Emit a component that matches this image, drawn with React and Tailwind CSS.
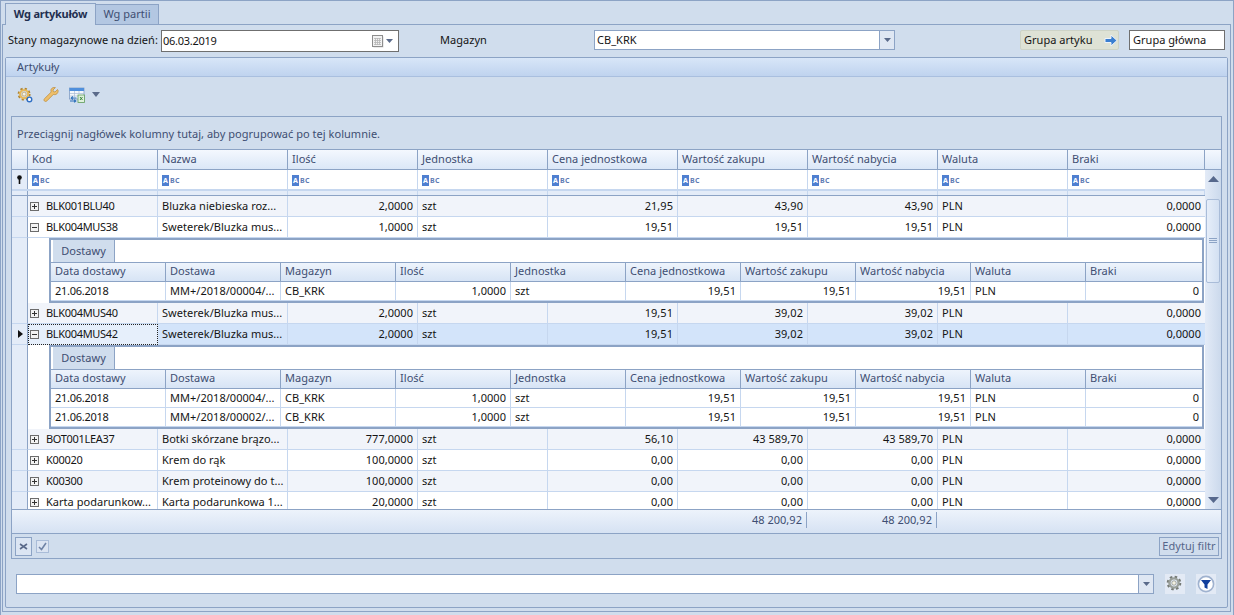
import React from "react";

const MAIN_COLS = "grid grid-cols-[16px_130px_130px_130px_130px_130px_130px_130px_130px_137px]";
const SUB_COLS = "grid grid-cols-[115px_115px_115px_115px_115px_115px_115px_115px_115px_116px]";
const HEADS = ["Kod", "Nazwa", "Ilość", "Jednostka", "Cena jednostkowa", "Wartość zakupu", "Wartość nabycia", "Waluta", "Braki"];
const SUBHEADS = ["Data dostawy", "Dostawa", "Magazyn", "Ilość", "Jednostka", "Cena jednostkowa", "Wartość zakupu", "Wartość nabycia", "Waluta", "Braki"];

const Gear = ({ c = "#e8b95a", dark = "#b08532", dot = true, size = 16 }) => (
  <svg width={size} height={size} viewBox="0 0 18 18">
    <circle cx="8" cy="8" r="6" fill="none" stroke={dark} strokeWidth="2.6" strokeDasharray="2.4 2.3" />
    <circle cx="8" cy="8" r="4.6" fill="none" stroke={c} strokeWidth="2.4" />
    <circle cx="8" cy="8" r="2.2" fill="#f3f1e2" stroke={dark} strokeWidth="0.6" />
    {dot && <circle cx="14" cy="14" r="2.6" fill="#fff" stroke="#2f6fc4" strokeWidth="1.6" />}
  </svg>
);
const Wrench = () => (
  <svg width="16" height="16" viewBox="0 0 16 16">
    <path d="M14.5 2.5 12 5l-1.6-.4L10 3l2.4-2.4C10.5 0 8.5 1 8 2.6c-.3 1 0 1.8.2 2.4L1.6 11.6c-.8.8-.8 1.8-.2 2.4s1.7.7 2.5-.1l6.5-6.5c.7.2 1.5.4 2.4.1 1.7-.6 2.7-2.6 2.2-4.5z" fill="#eebf6b" stroke="#b98a3a" strokeWidth="0.7" />
  </svg>
);
const TableExport = () => (
  <svg width="16" height="16" viewBox="0 0 16 16">
    <rect x="0.5" y="1" width="14.5" height="11" fill="#f4f7fb" stroke="#7f9cc4" strokeWidth="0.8" />
    <rect x="0.5" y="1" width="14.5" height="3" fill="#4f8fdc" />
    <path d="M1 6.5h14M1 9h8M5.5 4v6M10 4v3" stroke="#a9bcd6" strokeWidth="0.7" />
    <rect x="9" y="8" width="6.5" height="7.5" fill="#dff0dc" stroke="#5e9c5b" strokeWidth="0.8" />
    <path d="m11 10 2.5 3M13.5 10 11 13" stroke="#2f7d32" strokeWidth="0.9" />
    <path d="M7.5 11H2.5M3.8 9.4 2.2 11l1.6 1.6M1 14h5.5M5.2 12.6 6.8 14l-1.6 1.4" fill="none" stroke="#2c6fba" strokeWidth="1.1" />
  </svg>
);
const Abc = () => (
  <span className="mt-[1px] inline-flex h-[11px] items-center">
    <span className="flex h-[11px] w-[7px] items-center justify-center bg-[#4f7fd0] text-[7px] font-bold leading-none text-white">A</span>
    <span className="ml-[1px] text-[7px] font-bold leading-none tracking-[0.3px] text-[#5d7bb3]">BC</span>
  </span>
);
const Caret = ({ className = "", w = 7, h = 4 }) => (
  <svg width={w} height={h} viewBox="0 0 9 5" preserveAspectRatio="none" className={className}>
    <path d="M0 0h9L4.5 5z" fill="#5a6a8a" />
  </svg>
);
const Expander = ({ open }) => (
  <span className="flex h-[9px] w-[9px] shrink-0 items-center justify-center border border-[#6c6c6c] bg-[#f3f3f3]">
    <svg width="7" height="7" viewBox="0 0 7 7">
      <path d={open ? "M1 3.5h5" : "M1 3.5h5M3.5 1v5"} stroke="#333" strokeWidth="1" />
    </svg>
  </span>
);

const Row = ({ r, alt, selected, open, wide }) => {
  const bg = selected ? "bg-[#d3e4fa]" : alt ? "bg-[#f1f4fa]" : "bg-white";
  const cell = `h-[21px] overflow-hidden whitespace-nowrap border-b border-r border-[#c6d7ef] px-[4px] leading-[20px] ${bg}`;
  return (
    <div className={`${MAIN_COLS} h-[21px] text-[#141414]`}>
      <div className="flex h-[21px] items-center justify-center border-b border-r border-b-[#c6d7ef] border-r-[#8ca3c5] bg-[#e4ecf8]">
        {selected && (
          <svg width="5" height="8" viewBox="0 0 5 8" className="ml-[2px]"><path d="M0 0l5 4-5 4z" fill="#111" /></svg>
        )}
      </div>
      <div className={`flex h-[21px] items-center overflow-hidden whitespace-nowrap ${selected ? "border border-dotted border-[#222] bg-[#e6effb] pl-[1px]" : `border-b border-r border-[#c6d7ef] pl-[2px] ${bg}`}`}>
        <Expander open={open} />
        <span className={`ml-[7px] ${wide ? "" : "tracking-[-0.32px]"}`}>{r[0]}</span>
      </div>
      <div className={cell}>{r[1]}</div>
      <div className={`${cell} text-right`}>{r[2]}</div>
      <div className={cell}>szt</div>
      <div className={`${cell} text-right`}>{r[3]}</div>
      <div className={`${cell} text-right`}>{r[4]}</div>
      <div className={`${cell} text-right`}>{r[5]}</div>
      <div className={cell}>PLN</div>
      <div className={`${cell} border-r-0 text-right`}>0,0000</div>
    </div>
  );
};

const Detail = ({ rows }) => (
  <div className="flex">
    <div className="w-[16px] shrink-0 border-r border-r-[#8ca3c5] bg-[#e4ecf8]" />
    <div className="w-[1177px] bg-white pl-[21px]">
      <div className="w-[1155px] border-2 border-[#8ca3c5] bg-white">
        <div className="flex h-[22px] pl-[2px]">
          <div className="flex h-[22px] w-[62px] items-center justify-center border-r border-[#8ca3c5] bg-[#d0dded] text-[#3e4e72]">Dostawy</div>
        </div>
        <div className={`${SUB_COLS} h-[20px] border-b border-t border-[#8ca3c5] bg-gradient-to-b from-[#eef4fc] to-[#d7e4f5] text-[#3e4e72]`}>
          {SUBHEADS.map((h, i) => (
            <div key={h} className={`px-[4px] leading-[16px] ${i < 9 ? "border-r border-[#8ca3c5]" : ""}`}>{h}</div>
          ))}
        </div>
        {rows.map((d, i) => {
          const c = "h-[19px] overflow-hidden whitespace-nowrap border-b border-r border-[#c6d7ef] px-[4px] leading-[18px]";
          return (
            <div key={i} className={`${SUB_COLS} h-[19px] text-[#141414]`}>
              <div className={`${c} tracking-[-0.28px]`}>21.06.2018</div>
              <div className={c}>{d}</div>
              <div className={c}>CB_KRK</div>
              <div className={`${c} text-right`}>1,0000</div>
              <div className={c}>szt</div>
              <div className={`${c} text-right`}>19,51</div>
              <div className={`${c} text-right`}>19,51</div>
              <div className={`${c} text-right`}>19,51</div>
              <div className={c}>PLN</div>
              <div className={`${c} border-r-0 pr-[3px] text-right`}>0</div>
            </div>
          );
        })}
      </div>
    </div>
  </div>
);

const Scrollbar = () => (
  <div className="flex w-[16px] shrink-0 flex-col items-center bg-gradient-to-r from-[#e3ebf7] to-[#cbd9ec]">
    <svg width="11" height="6" viewBox="0 0 11 6" className="mt-[6px] shrink-0"><path d="M0 6 5.5 0 11 6z" fill="#56688c" /></svg>
    <div className="mt-[17px] flex h-[84px] w-[14px] shrink-0 items-center justify-center rounded-[2px] border border-[#a9bcd8] bg-gradient-to-r from-[#e6eef9] to-[#d3e0f2]">
      <svg width="8" height="6" viewBox="0 0 8 6"><path d="M0 .5h8M0 2.5h8M0 4.5h8" stroke="#8ca3c5" strokeWidth="1" /></svg>
    </div>
    <div className="flex-1" />
    <svg width="11" height="6" viewBox="0 0 11 6" className="mb-[6px] shrink-0"><path d="M0 0 5.5 6 11 0z" fill="#56688c" /></svg>
  </div>
);

export default function App() {
  return (
    <div className="h-[615px] w-[1234px] overflow-hidden border-l border-r border-t border-[#8ca3c5] bg-[#d0dded] text-[11px] tracking-[0.03px] font-['Noto_Sans',sans-serif]">
      {/* tabs */}
      <div className="flex h-[23px] items-end pl-[4px]">
        <div className="relative z-10 -mb-[1px] flex h-[22px] w-[91px] items-center justify-center border-l border-r border-t border-[#8ca3c5] bg-[#d0dded] pb-[1px] font-bold tracking-[-0.25px] text-[#1f2f50]">Wg artykułów</div>
        <div className="flex h-[20px] w-[63px] items-center justify-center border-r border-t border-[#8ca3c5] bg-[#b3c7e2] text-[#3e4e72]">Wg partii</div>
      </div>
      {/* tab page */}
      <div className="ml-[1px] h-[588px] w-[1229px] border border-[#8ca3c5] px-[2px]">
        <div className="flex h-[32px] items-start pt-[5px] text-[#141414]">
          <span className="ml-[3px] w-[153px] whitespace-nowrap leading-[20px]">Stany magazynowe na dzień:</span>
          <div className="flex h-[22px] w-[238px] items-center border border-[#6f6f6f] bg-white pl-[1px]">
            <span className="tracking-[-0.28px]">06.03.2019</span>
            <div className="flex-1" />
            <svg width="12" height="13" viewBox="0 0 12 13">
              <rect x="1.5" y="1.5" width="10" height="11" fill="#9a9a9a" opacity="0.4" />
              <rect x="0.5" y="0.5" width="10" height="11" fill="#f2f2f2" stroke="#8d8d8d" />
              <path d="M2 3.5h7M2 5.5h7M2 7.5h7M2 9.5h7M3.5 3v7M5.5 3v7M7.5 3v7" stroke="#b5b5b5" strokeWidth="0.8" />
            </svg>
            <Caret className="ml-[2px] mr-[5px]" />
          </div>
          <span className="ml-[41px] w-[154px] leading-[20px]">Magazyn</span>
          <div className="flex h-[20px] w-[301px] items-center border border-[#8ca3c5] bg-white pl-[2px]">
            <span>CB_KRK</span>
            <div className="flex-1" />
            <div className="flex h-full w-[15px] items-center justify-center border-l border-[#8ca3c5] bg-[#dfe7f3]"><Caret /></div>
          </div>
          <div className="ml-[125px] flex h-[20px] w-[99px] items-center whitespace-nowrap rounded-[2px] border border-[#cdd3c6] bg-[#dee2d5] pl-[3px]">
            <span>Grupa artyku</span>
            <svg width="14" height="13" viewBox="0 0 14 13" className="ml-[12px] shrink-0">
              <path d="M1 4.5h6V1l6 5.5L7 12V8.5H1z" fill="#3b7fd0" stroke="#eef3fa" strokeWidth="1" />
            </svg>
          </div>
          <div className="ml-[10px] flex h-[20px] w-[96px] items-center whitespace-nowrap border border-[#6f6f6f] bg-white pl-[3px]">Grupa główna</div>
        </div>
        {/* group box */}
        <div className="h-[551px] w-[1223px] rounded-[2px] border border-[#8ca3c5] ">
          <div className="flex h-[19px] items-center border-b border-[#a9bfdf] bg-gradient-to-b from-[#d8e6f8] to-[#bfd3ef] pl-[11px] text-[#3e4e72]">Artykuły</div>
          <div className="flex h-[39px] items-start pl-[11px] pt-[10px]">
            <Gear />
            <span className="ml-[10px]"><Wrench /></span>
            <span className="ml-[10px]"><TableExport /></span>
            <Caret w={8} h={5} className="ml-[7px] mt-[5px]" />
          </div>
          {/* grid */}
          <div className="ml-[5px] w-[1211px] border border-[#8ca3c5]">
            <div className="flex h-[32px] items-end pb-[7px] pl-[5px] text-[#3e4e72]">Przeciągnij nagłówek kolumny tutaj, aby pogrupować po tej kolumnie.</div>
            <div className="flex h-[21px] border-b border-t border-[#8ca3c5] bg-gradient-to-b from-[#f4f8fe] to-[#dbe7f7] text-[#3e4e72]">
              <div className={`${MAIN_COLS} w-[1193px]`}>
                <div className="border-r border-[#8ca3c5]" />
                {HEADS.map((h) => (
                  <div key={h} className="border-r border-[#8ca3c5] px-[4px] leading-[18px]">{h}</div>
                ))}
              </div>
            </div>
            <div className="flex h-[339px]">
              <div className="w-[1193px] overflow-hidden bg-white">
                <div className={`${MAIN_COLS} h-[21px] border-b-2 border-[#c6d7ef] bg-white`}>
                  <div className="flex items-center justify-center border-r border-[#8ca3c5] bg-[#e4ecf8]">
                    <svg width="7" height="9" viewBox="0 0 7 9"><circle cx="3.5" cy="2.5" r="2.3" fill="#111" /><path d="M3.5 4v5" stroke="#111" strokeWidth="1.6" /></svg>
                  </div>
                  {HEADS.map((h, i) => (
                    <div key={h} className={`flex items-center pl-[4px] ${i < 8 ? "border-r border-[#c6d7ef]" : ""}`}><Abc /></div>
                  ))}
                </div>
                <div className={`${MAIN_COLS} h-[5px] border-b border-[#8ca3c5] bg-[#e4ecf8]`}>
                  <div className="border-r border-[#8ca3c5]" />
                  {HEADS.map((h) => (
                    <div key={h} className="border-r border-[#c6d7ef]" />
                  ))}
                </div>
                <Row alt r={["BLK001BLU40", "Bluzka niebieska roz...", "2,0000", "21,95", "43,90", "43,90"]} />
                <Row open r={["BLK004MUS38", "Sweterek/Bluzka mus...", "1,0000", "19,51", "19,51", "19,51"]} />
                <Detail rows={["MM+/2018/00004/..."]} />
                <Row alt r={["BLK004MUS40", "Sweterek/Bluzka mus...", "2,0000", "19,51", "39,02", "39,02"]} />
                <Row selected open r={["BLK004MUS42", "Sweterek/Bluzka mus...", "2,0000", "19,51", "39,02", "39,02"]} />
                <Detail rows={["MM+/2018/00004/...", "MM+/2018/00002/..."]} />
                <Row alt r={["BOT001LEA37", "Botki skórzane brązo...", "777,0000", "56,10", "43 589,70", "43 589,70"]} />
                <Row r={["K00020", "Krem do rąk", "100,0000", "0,00", "0,00", "0,00"]} />
                <Row alt r={["K00300", "Krem proteinowy do t...", "100,0000", "0,00", "0,00", "0,00"]} />
                <Row wide r={["Karta podarunkow...", "Karta podarunkowa 1...", "20,0000", "0,00", "0,00", "0,00"]} />
              </div>
              <Scrollbar />
            </div>
            {/* footer */}
            <div className="h-[25px] border-b border-t border-[#8ca3c5] bg-gradient-to-b from-[#edf3fb] to-[#d6e2f3] text-[#3e4e72]">
              <div className={`${MAIN_COLS} h-[18px] w-[1193px] pt-[2px]`}>
                <div className="col-start-7 mr-[1px] border-r border-[#8ca3c5] pr-[4px] text-right leading-[16px]">48 200,92</div>
                <div className="col-start-8 mr-[1px] border-r border-[#8ca3c5] pr-[4px] text-right leading-[16px]">48 200,92</div>
              </div>
            </div>
            {/* filter bar */}
            <div className="flex h-[24px] items-center pl-[3px] pr-[2px]">
              <div className="flex h-[19px] w-[17px] items-center justify-center border border-[#8ca3c5] bg-[#dbe5f3]">
                <svg width="9" height="7" viewBox="0 0 9 7"><path d="M1 1l7 5M8 1 1 6" stroke="#5a6a8a" strokeWidth="1.6" /></svg>
              </div>
              <div className="ml-[4px] flex h-[13px] w-[13px] items-center justify-center border border-[#a9bcd8] bg-[#dbe4f2]">
                <svg width="9" height="9" viewBox="0 0 9 9"><path d="M1 5l2.5 2.5L8 1" fill="none" stroke="#6f83a6" strokeWidth="1.6" /></svg>
              </div>
              <div className="flex-1" />
              <div className="flex h-[19px] w-[60px] items-center justify-center whitespace-nowrap border border-[#8ca3c5] text-[#56668a]">Edytuj filtr</div>
            </div>
          </div>
          {/* bottom */}
          <div className="ml-[10px] mt-[15px] flex items-center">
            <div className="flex h-[20px] w-[1138px] items-center justify-end border border-[#8ca3c5] bg-white">
              <div className="flex h-full w-[15px] items-center justify-center border-l border-[#8ca3c5] bg-[#dfe7f3]"><Caret /></div>
            </div>
            <div className="ml-[11px] flex h-[20px] w-[20px] items-center justify-center bg-[#e3eaf5]">
              <Gear c="#9aa09a" dark="#757a75" dot={false} size={18} />
            </div>
            <div className="ml-[11px] flex h-[20px] w-[20px] items-center justify-center bg-[#e3eaf5]">
              <svg width="18" height="18" viewBox="0 0 18 18">
                <circle cx="9" cy="9" r="7.6" fill="#fff" stroke="#9fb2cf" strokeWidth="1.6" />
                <path d="M4 5h10L10.5 9.5V14l-3-1.5v-3z" fill="#123f9c" />
              </svg>
            </div>
          </div>
        </div>
      </div>
    </div>
  );
}
